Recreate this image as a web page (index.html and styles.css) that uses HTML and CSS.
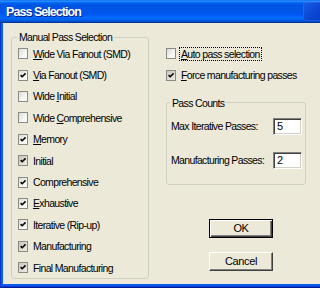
FILE: index.html
```html
<!DOCTYPE html>
<html>
<head>
<meta charset="utf-8">
<link rel="stylesheet" href="styles.css">
</head>
<body>
<div class="window">
  <div class="titlebar">
    <span class="title">Pass Selection</span>
    <span class="helpbtn"></span>
  </div>
  <div class="frame">
    <div class="client">
      <fieldset class="group manual">
        <legend>Manual Pass Selection</legend>
        <div class="check"><span class="box"></span><span class="lbl"><u>W</u>ide Via Fanout (SMD)</span></div>
        <div class="check"><span class="box on"><svg viewBox="0 0 10 10"><path d="M2 4.5 L4 6.5 L8.2 2.3"/></svg></span><span class="lbl"><u>V</u>ia Fanout (SMD)</span></div>
        <div class="check"><span class="box"></span><span class="lbl">Wide <u>I</u>nitial</span></div>
        <div class="check"><span class="box"></span><span class="lbl">Wide <u>C</u>omprehensive</span></div>
        <div class="check"><span class="box on"><svg viewBox="0 0 10 10"><path d="M2 4.5 L4 6.5 L8.2 2.3"/></svg></span><span class="lbl"><u>M</u>emory</span></div>
        <div class="check"><span class="box on dim"><svg viewBox="0 0 10 10"><path d="M2 4.5 L4 6.5 L8.2 2.3"/></svg></span><span class="lbl">Initial</span></div>
        <div class="check"><span class="box on"><svg viewBox="0 0 10 10"><path d="M2 4.5 L4 6.5 L8.2 2.3"/></svg></span><span class="lbl">Comprehensive</span></div>
        <div class="check"><span class="box on"><svg viewBox="0 0 10 10"><path d="M2 4.5 L4 6.5 L8.2 2.3"/></svg></span><span class="lbl"><u>E</u>xhaustive</span></div>
        <div class="check"><span class="box on"><svg viewBox="0 0 10 10"><path d="M2 4.5 L4 6.5 L8.2 2.3"/></svg></span><span class="lbl">Iterative (Rip-up)</span></div>
        <div class="check"><span class="box on dim"><svg viewBox="0 0 10 10"><path d="M2 4.5 L4 6.5 L8.2 2.3"/></svg></span><span class="lbl">Manufacturing</span></div>
        <div class="check"><span class="box on dim"><svg viewBox="0 0 10 10"><path d="M2 4.5 L4 6.5 L8.2 2.3"/></svg></span><span class="lbl">Final Manufacturing</span></div>
      </fieldset>
      <div class="side">
        <div class="check"><span class="box"></span><span class="lbl focus"><u>A</u>uto pass selection</span></div>
        <div class="check"><span class="box on dim"><svg viewBox="0 0 10 10"><path d="M2 4.5 L4 6.5 L8.2 2.3"/></svg></span><span class="lbl"><u>F</u>orce manufacturing passes</span></div>
        <fieldset class="group counts">
          <legend>Pass Counts</legend>
          <div class="field"><span>Max Iterative Passes:</span><span class="edit">5</span></div>
          <div class="field"><span>Manufacturing Passes:</span><span class="edit">2</span></div>
        </fieldset>
        <div class="buttons">
          <button class="btn default">OK</button>
          <button class="btn">Cancel</button>
        </div>
      </div>
    </div>
  </div>
</div>
</body>
</html>
```
FILE: styles.css
```css
html, body {
  margin: 0;
  padding: 0;
  width: 320px;
  height: 288px;
  overflow: hidden;
  background: #ECE9D8;
}

.window {
  width: 320px;
  height: 288px;
  display: flex;
  flex-direction: column;
  font-family: "Liberation Sans", Arial, sans-serif;
  font-size: 10.5px;
  letter-spacing: -0.65px;
  color: #000;
}

.titlebar {
  height: 23px;
  flex: none;
  display: flex;
  align-items: center;
  justify-content: space-between;
  padding-left: 6px;
  background: linear-gradient(to bottom,
    #0058EE 0%, #3593FF 4%, #288EFF 6%, #127DFF 8%, #036FFC 10%,
    #0262EE 14%, #0057E5 20%, #0054E3 24%, #0055EB 56%, #005BF5 66%,
    #026AFE 76%, #0062EF 86%, #0052D6 92%, #0040AB 96%, #003092 100%);
}

.title {
  color: #fff;
  font-weight: bold;
  font-size: 12.5px;
  letter-spacing: -0.95px;
  text-shadow: 1px 1px 0 #0A1883;
  padding-top: 1px;
}

.helpbtn {
  width: 21px;
  height: 19px;
  margin-right: -4px;
  border-radius: 3px;
  background: linear-gradient(135deg, #1A5CE6 0%, #0A44CF 60%, #083CC0 100%);
  box-shadow: inset 0 0 0 1px rgba(90, 130, 240, 0.35);
}

.frame {
  flex: 1;
  display: flex;
  padding: 0 0 4px 3px;
  background: #0A5CF0;
  box-shadow: inset 1px 0 0 #0838C8, inset 0 -1px 0 #001E9A, inset 0 -2px 0 #0838D0;
}

.client {
  flex: 1;
  display: flex;
  align-items: flex-start;
  padding-left: 8px;
  background: #ECE9D8;
}

.group {
  box-sizing: border-box;
  margin: 0;
  border: 1px solid #D0D0BF;
  border-radius: 3px;
  min-inline-size: 0;
}

.group legend {
  padding: 0 2px;
  margin-left: -1px;
  line-height: 12px;
  height: 12px;
}

.manual {
  margin-top: 8px;
  width: 138px;
  height: 248px;
  padding: 0 4px 0 6px;
}

.check {
  display: flex;
  align-items: center;
  height: 21.4px;
  white-space: nowrap;
}

.box {
  box-sizing: border-box;
  flex: none;
  width: 10px;
  height: 11px;
  margin-right: 5px;
  border: 1px solid #8A8A86;
  background: linear-gradient(135deg, #DCDCD5 0%, #F4F4F0 55%, #FFFFFF 100%);
  display: flex;
  align-items: center;
  justify-content: center;
}

.box.dim {
  background: linear-gradient(135deg, #C9C7BC 0%, #E0DED4 60%, #ECEAE2 100%);
}

.box svg {
  width: 8px;
  height: 9px;
  overflow: visible;
}

.box svg path {
  fill: none;
  stroke: #000;
  stroke-width: 1.9;
  stroke-linecap: butt;
  stroke-linejoin: miter;
}

.lbl u {
  text-decoration-thickness: 1px;
  text-underline-offset: 1px;
}

.lbl.focus {
  outline: 1px dotted #000;
  padding: 0 1px;
  margin-left: -1px;
}

.side {
  margin-left: 17px;
  padding-top: 20px;
  display: flex;
  flex-direction: column;
}

.counts {
  margin-top: 11px;
  width: 140px;
  padding: 9px 3px 15px 4px;
  display: flex;
  flex-direction: column;
  gap: 17px;
}

.field {
  display: flex;
  align-items: center;
  justify-content: space-between;
  height: 17px;
  white-space: nowrap;
}

.edit {
  box-sizing: border-box;
  width: 29px;
  height: 17px;
  padding-left: 3px;
  background: #fff;
  border: 1px solid;
  border-color: #808080 #FFFFFF #FFFFFF #808080;
  box-shadow: inset 1px 1px 0 #404040, inset -1px -1px 0 #D4D0C8;
  display: flex;
  align-items: center;
  font-size: 11px;
  letter-spacing: 0;
}

.buttons {
  margin-top: 34px;
  margin-left: 43px;
  display: flex;
  flex-direction: column;
  gap: 14px;
}

.btn {
  box-sizing: border-box;
  width: 64px;
  height: 19px;
  padding: 0;
  font: inherit;
  font-size: 11px;
  letter-spacing: -0.4px;
  color: #000;
  background: #ECE9D8;
  border: 1px solid;
  border-color: #FFFFFF #404040 #404040 #FFFFFF;
  box-shadow: inset -1px -1px 0 #808080;
  border-radius: 0;
}

.btn.default {
  border: 1px solid #000;
  box-shadow: inset 1px 1px 0 #FFFFFF, inset -1px -1px 0 #404040, inset -2px -2px 0 #808080;
}
```
